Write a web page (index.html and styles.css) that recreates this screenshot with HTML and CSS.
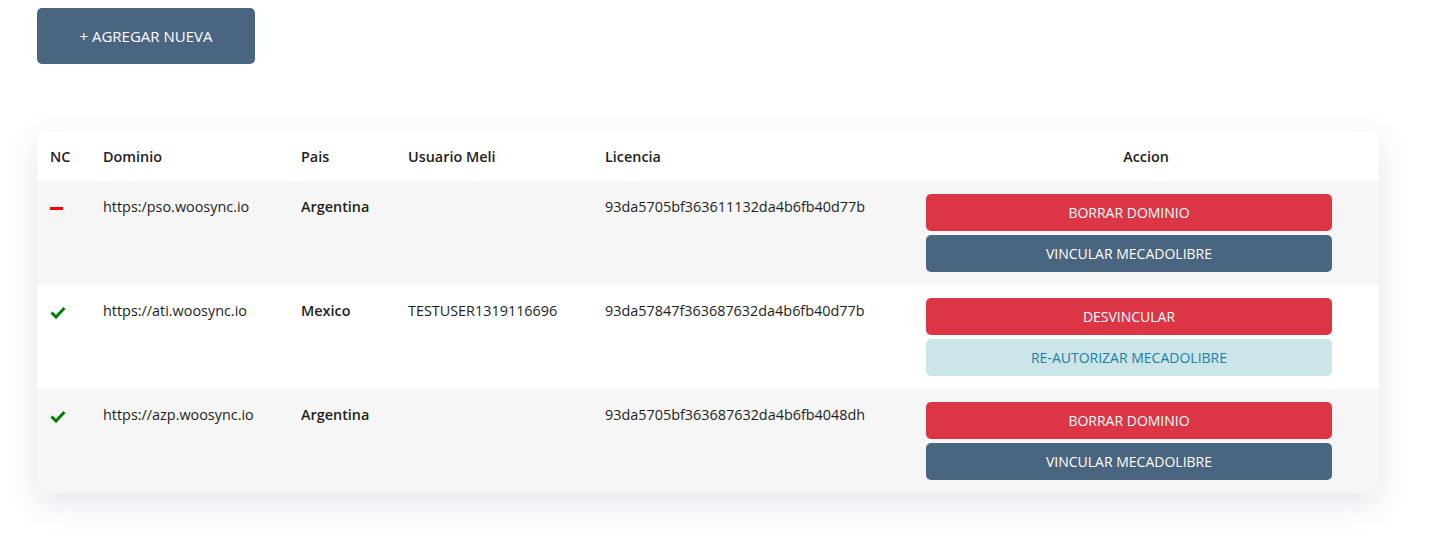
FILE: index.html
```html
<!DOCTYPE html>
<html lang="es">
<head>
    <meta charset="UTF-8">
    <meta name="viewport" content="width=device-width, initial-scale=1.0">
    <title>Dominios</title>
    <link rel="stylesheet" href="styles.css">
</head>
<body>
    <div class="page">
        <button class="btn-add">+ AGREGAR NUEVA</button>

        <div class="card">
            <table class="domains">
                <thead>
                    <tr>
                        <th class="col-nc">NC</th>
                        <th class="col-domain">Dominio</th>
                        <th class="col-country">Pais</th>
                        <th class="col-user">Usuario Meli</th>
                        <th class="col-license">Licencia</th>
                        <th class="col-action">Accion</th>
                    </tr>
                </thead>
                <tbody>
                    <tr>
                        <td><span class="status-off"></span></td>
                        <td>https:/pso.woosync.io</td>
                        <td class="country">Argentina</td>
                        <td></td>
                        <td>93da5705bf363611132da4b6fb40d77b</td>
                        <td>
                            <div class="actions">
                                <button class="btn btn-danger">BORRAR DOMINIO</button>
                                <button class="btn btn-primary">VINCULAR MECADOLIBRE</button>
                            </div>
                        </td>
                    </tr>
                    <tr>
                        <td>
                            <svg class="status-ok" width="16" height="13" viewBox="0 0 16 13"><path d="M1.5 6.5 L6 11 L14.5 2" fill="none" stroke="#008000" stroke-width="3"/></svg>
                        </td>
                        <td>https://ati.woosync.io</td>
                        <td class="country">Mexico</td>
                        <td>TESTUSER1319116696</td>
                        <td>93da57847f363687632da4b6fb40d77b</td>
                        <td>
                            <div class="actions">
                                <button class="btn btn-danger">DESVINCULAR</button>
                                <button class="btn btn-info">RE-AUTORIZAR MECADOLIBRE</button>
                            </div>
                        </td>
                    </tr>
                    <tr>
                        <td>
                            <svg class="status-ok" width="16" height="13" viewBox="0 0 16 13"><path d="M1.5 6.5 L6 11 L14.5 2" fill="none" stroke="#008000" stroke-width="3"/></svg>
                        </td>
                        <td>https://azp.woosync.io</td>
                        <td class="country">Argentina</td>
                        <td></td>
                        <td>93da5705bf363687632da4b6fb4048dh</td>
                        <td>
                            <div class="actions">
                                <button class="btn btn-danger">BORRAR DOMINIO</button>
                                <button class="btn btn-primary">VINCULAR MECADOLIBRE</button>
                            </div>
                        </td>
                    </tr>
                </tbody>
            </table>
        </div>
    </div>
</body>
</html>
```

FILE: styles.css
```css
body {
    font-family: 'Open Sans', 'Noto Sans', sans-serif;
    margin: 0;
    padding: 0;
    background-color: #fff;
    color: #1e1e1e;
}

.page {
    padding: 8px 59px 47px 37px;
}

.btn-add {
    width: 218px;
    height: 56px;
    background: #4a6580;
    color: #fff;
    border: none;
    border-radius: 5px;
    font-family: inherit;
    font-size: 15px;
    cursor: pointer;
}

.card {
    margin-top: 67px;
    background: #fff;
    box-shadow: 0 10px 30px rgba(40, 50, 90, 0.12);
}

.domains {
    width: 100%;
    border-collapse: collapse;
    font-size: 14.4px;
}

.domains th {
    height: 50px;
    padding: 0 13px;
    text-align: left;
    font-weight: 600;
}

.domains th.col-action {
    text-align: center;
}

.col-nc { width: 27px; }
.col-domain { width: 172px; }
.col-country { width: 81px; }
.col-user { width: 171px; }
.col-license { width: 295px; }

.domains td {
    padding: 13px 13px 13px;
    vertical-align: top;
    line-height: 26px;
}

.domains tbody tr:nth-child(odd) {
    background: #f6f6f6;
}

.country {
    font-weight: 600;
}

.status-off {
    display: inline-block;
    width: 13px;
    height: 3px;
    background: #f00;
    vertical-align: middle;
}

.status-ok {
    vertical-align: middle;
}

.actions {
    display: flex;
    flex-direction: column;
    gap: 4px;
    width: 406px;
}

.btn {
    height: 37px;
    border: none;
    border-radius: 5px;
    font-family: inherit;
    font-size: 14px;
    cursor: pointer;
}

.btn-danger {
    background: #dc3545;
    color: #fff;
}

.btn-primary {
    background: #4a6580;
    color: #fff;
}

.btn-info {
    background: #cce5e9;
    color: #1b80a8;
}
```
